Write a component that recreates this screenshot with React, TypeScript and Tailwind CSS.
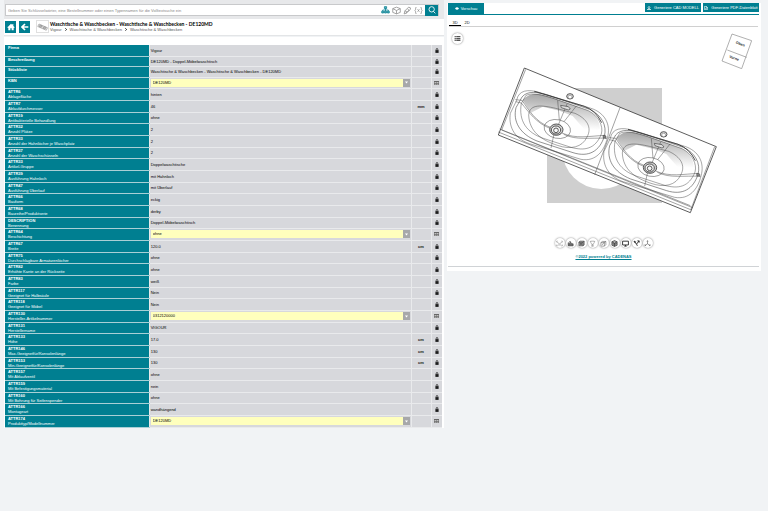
import type { ReactNode } from "react";

type Row = { code: string; name?: string; value: string; unit?: string; options?: boolean };

const headRows: Row[] = [
  { code: "Firma", value: "Vigour" },
  { code: "Beschreibung", value: "DE120MD - Doppel-Möbelwaschtisch" },
  { code: "Stückliste", value: "Waschtische & Waschbecken - Waschtische & Waschbecken - DE120MD" },
  { code: "KBN", value: "DE120MD", options: true },
];

const attrRows: Row[] = [
  { code: "ATTR6", name: "Ablagefläche", value: "hinten" },
  { code: "ATTR7", name: "Ablaufdurchmesser", value: "46", unit: "mm" },
  { code: "ATTR19", name: "Antibakterielle Behandlung", value: "ohne" },
  { code: "ATTR32", name: "Anzahl Plätze", value: "2" },
  { code: "ATTR33", name: "Anzahl der Hahnlöcher je Waschplatz", value: "2" },
  { code: "ATTR37", name: "Anzahl der Waschschüsseln", value: "2" },
  { code: "ATTR33", name: "Artikel-Gruppe", value: "Doppelwaschtische" },
  { code: "ATTR39", name: "Ausführung Hahnloch", value: "mit Hahnloch" },
  { code: "ATTR47", name: "Ausführung Überlauf", value: "mit Überlauf" },
  { code: "ATTR66", name: "Bauform", value: "eckig" },
  { code: "ATTR68", name: "Baureihe/Produktserie", value: "derby" },
  { code: "DESCRIPTION", name: "Benennung", value: "Doppel-Möbelwaschtisch" },
  { code: "ATTR64", name: "Beschichtung", value: "ohne", options: true },
  { code: "ATTR67", name: "Breite", value: "120.0", unit: "cm" },
  { code: "ATTR75", name: "Durchschlagbare Armaturenlöcher", value: "ohne" },
  { code: "ATTR82", name: "Erhöhte Kante an der Rückseite", value: "ohne" },
  { code: "ATTR83", name: "Farbe", value: "weiß" },
  { code: "ATTR117", name: "Geeignet für Halbsäule", value: "Nein" },
  { code: "ATTR118", name: "Geeignet für Möbel", value: "Nein" },
  { code: "ATTR130", name: "Hersteller-Artikelnummer", value: "0312120000", options: true },
  { code: "ATTR131", name: "Herstellername", value: "VIGOUR" },
  { code: "ATTR133", name: "Höhe", value: "17.0", unit: "cm" },
  { code: "ATTR146", name: "Max-Geeignetfür/Konsolenlänge", value: "130", unit: "cm" },
  { code: "ATTR153", name: "Min-Geeignetfür/Konsolenlänge", value: "130", unit: "cm" },
  { code: "ATTR157", name: "Mit Ablaufventil", value: "ohne" },
  { code: "ATTR159", name: "Mit Befestigungsmaterial", value: "nein" },
  { code: "ATTR160", name: "Mit Bohrung für Seifenspender", value: "ohne" },
  { code: "ATTR166", name: "Montageart", value: "wandhängend" },
  { code: "ATTR174", name: "Produkttyp/Modellnummer", value: "DE120MD", options: true },
];

function AttributeRow({ row, height, id }: { row: Row; height: string; id: string }) {
  const cell = "border-b border-l border-[#e9eaec] bg-[#d7d8dc] p-0 align-middle";
  return (
    <tr className={height}>
      <th scope="row" className="border-b border-[#a9d0d6] bg-[#007f91] p-0 pl-[3px] text-left align-top text-white">
        <label htmlFor={row.options ? id : undefined} className="block pt-px">
          <span className="block text-[4px] leading-[4px] font-bold">{row.code}</span>
          {row.name && <span className="block text-[4px] leading-[5px] font-normal">{row.name}</span>}
        </label>
      </th>
      <td className={cell}>
        {row.options ? (
          <span className="relative mr-px ml-px block h-2">
            <select id={id} className="block h-2 w-full appearance-none rounded-none bg-[#ffffbd] pl-[2px] text-[4px] leading-[8px] font-medium text-black">
              <option>{row.value}</option>
            </select>
            <span className="pointer-events-none absolute top-0 right-0 flex h-2 w-[7px] items-center justify-center bg-[#a7a8aa]">
              <svg viewBox="0 0 6 6" className="size-[3px] fill-white"><path d="M0 1h6L3 5z" /></svg>
            </span>
          </span>
        ) : (
          <span className="block pl-px text-[4px] leading-[5px] font-medium text-black">{row.value}</span>
        )}
      </td>
      <td className={cell}>
        <span className="block text-center text-[4px] leading-[5px] font-bold">{row.unit}</span>
      </td>
      <td className={cell}>
        {row.options ? (
          <svg viewBox="0 0 10 8" className="mx-auto block h-1 w-[5px]"><path d="M0 0h10v8H0z" fill="#666" /><path d="M1 2.500h3v1.500H1zM5 2.500h4v1.500H5zM1 5.500h3V7H1zM5 5.500h4V7H5z" fill="#ddd" /></svg>
        ) : (
          <svg viewBox="0 0 10 12" className="mx-auto block h-[5px] w-1"><path d="M1 5h8v7H1z" fill="#1c1c1c" /><path d="M3 5V3a2 2 0 0 1 4 0v2" fill="none" stroke="#1c1c1c" strokeWidth="1.8" /></svg>
        )}
      </td>
    </tr>
  );
}

function Basin() {
  return (
    <g fill="none" stroke="#333" strokeWidth="1.3">
      <path d="M107 121C112 90 142 87 174 97L330 145C371 158 391 193 379 234C370 272 345 306 300 298L145 251C94 233 83 193 88 160Z" />
      <path d="M123 111C139 91 170 96 203 106L326 148C361 164 379 196 370 229C356 273 324 293 276 278L168 243C116 222 95 184 105 143Z" strokeWidth="1.6" />
      <path d="M135 106C155 97 184 105 219 116L322 152C352 167 368 198 361 222C343 268 310 273 270 262L187 235C137 218 112 183 121 130Z" />
      <path d="M143 165C146 130 184 136 224 145L282 160C318 176 334 203 318 231C304 262 269 270 229 256C181 240 145 215 143 165Z" />
      <path d="M103 119L123 121C144 151 165 187 208 202M243 219C285 238 325 228 374 226M104 125L121 129C142 155 168 191 207 205M248 223C287 242 327 232 378 235" />
      <path d="M366 226l9 2v7l-9-2z" fill="#888" />
      <path d="M230 121L235 181M286 138L249 185M258 132L231 197M219 222L210 264" />
      <path d="M160 94L310 139Q344 151 362 188" strokeWidth="2.6" />
      <ellipse cx="229" cy="207" rx="40" ry="28" transform="rotate(12 229 207)" />
      <ellipse cx="226" cy="209" rx="20" ry="17" fill="#ccc" strokeWidth="2.4" />
      <ellipse cx="225" cy="210" rx="14" ry="12" fill="#f6f6f6" strokeWidth="2.4" />
      <circle cx="225" cy="211" r="7" strokeWidth="2.4" />
      <ellipse cx="267" cy="109" rx="10" ry="8" fill="#ddd" strokeWidth="2.4" />
      <ellipse cx="267" cy="111" rx="6" ry="5" fill="#fff" strokeWidth="1" />
      <path d="M239 136l23 4 6 7-6 3-21-7z" fill="#ddd" strokeWidth="1.8" />
    </g>
  );
}

function Washbasin() {
  return (
    <svg viewBox="45 15 669 450" className="mt-[33px] ml-auto h-[150px] w-[223px]" role="img" aria-label="DE120MD">
      <defs>
        <linearGradient id="shade" x1="0.3" y1="0" x2="0.15" y2="1"><stop offset="0" stopColor="#a4a4a4" /><stop offset=".8" stopColor="#fff" /></linearGradient>
      </defs>
      <path d="M198 84H543V429H198z" fill="#cfcfcf" />
      <circle cx="361" cy="270" r="117" fill="#fff" />
      <path d="M130 24L706 260L628 458L52 225z" fill="#fff" stroke="#333" strokeWidth="2.4" />
      <path d="M134 28L62 210L635 443M52 216L629 449M56 207L628 437M701 260L629 450M417 143L341 344" fill="none" stroke="#444" strokeWidth="1.5" />
      <path d="M125 120C150 93 180 101 218 114L320 151Q354 166 357 207L320 220L275 168L235 152L185 140L150 158z" fill="url(#shade)" />
      <path d="M406 234C431 207 461 215 499 228L601 265Q635 280 638 321L601 334L556 282L516 266L466 254L431 272z" fill="url(#shade)" />
      <Basin />
      <g transform="translate(281 114)"><Basin /></g>
    </svg>
  );
}

const toolIcons: { label: string; color: string; art: ReactNode }[] = [
  { label: "Zoom", color: "text-[#888]", art: <path d="M2 8V4h4M18 4h4v4M22 16v4h-4M6 20H2v-4M4 8l8 5 8-5M6 17h12" /> },
  { label: "Messen", color: "text-[#333]", art: <path d="M4 20V9l6 5V4l6 9h5v7zM4 17h16" fill="#888" /> },
  { label: "Schnitt", color: "text-[#333]", art: <path d="M3 7l4-3h14v13l-4 3H3zM3 8h14v12M17 8l4-4M6 12h8M6 16h8" fill="#aaa" /> },
  { label: "Beleuchtung", color: "text-[#888]", art: <path d="M6 4h12v5l-4 6h-4L6 9zM10 15v5h4v-5M3 5h3M18 5h3M8 21h8" /> },
  { label: "Ansicht", color: "text-[#666]", art: <path d="M3 9l5-4h12v11l-5 5H3zM3 9h12v12M15 9l5-4M7 17l9-11" /> },
  { label: "Darstellung", color: "text-[#222]", art: <path d="M12 2l9 4v12l-9 4-9-4V6zM3 6l9 4 9-4M12 10v12M6 12l4 2M14 14l5-2" fill="#999" /> },
  { label: "Vollbild", color: "text-[#222]", art: <path d="M2 4h20v13H2zM12 17v4M8 21h8" strokeWidth="3" /> },
  { label: "Explosion", color: "text-[#222]", art: <path d="M4 5l8 9 9-11M15 3h6v6M12 14l3 6M4 4l3 5 2-3z" strokeWidth="3" /> },
  { label: "Achsen", color: "text-[#555]", art: <path d="M12 13V3M12 13l-9 6M12 13l9 6M10 5l2-3 2 3M3 15v4h4M21 15v4h-4" /> },
];

function HierarchyIcon() {
  return (
    <svg viewBox="0 0 24 20" className="h-2 w-[9px] fill-[#5fb0bb] stroke-[#007f91]" strokeWidth="2">
      <path d="M9 1h6v5H9zM2 13h5v5H2zM9.500 13h5v5h-5zM17 13h5v5h-5z" /><path d="M12 6v7M4.500 13V10h15v3" fill="none" />
    </svg>
  );
}

const navButton = "flex h-3 w-[11px] items-center justify-center bg-[#007f91] text-white";
const actionButton = "flex h-[9px] w-14 items-center justify-center gap-[3px] bg-[#007f91] text-[4px] leading-[5px] font-medium whitespace-nowrap text-white";

export default function App() {
  return (
    <div className="min-h-screen bg-[#f1f3f5] pr-[7px] font-['Liberation_Sans',Arial,sans-serif] text-[#111]">
      <div className="grid grid-cols-[444fr_314fr] items-start gap-[3px]">
        <main className="pl-1">
          <div className="bg-[#e7e8ea] pt-1 pr-[5px] pb-[3px] pl-px">
            <form className="flex h-3 items-center border border-[#c8c9cb] bg-white">
              <input aria-label="Suche" placeholder="Geben Sie Schlüsselwörter, eine Bestellnummer oder einen Typennamen für die Volltextsuche ein" className="h-full min-w-0 flex-1 px-[2px] text-[4px] outline-none placeholder:text-[#888]" />
              <div className="flex items-center gap-[2px] text-[#888]">
                <HierarchyIcon />
                <svg viewBox="0 0 24 24" className="size-[9px] fill-none stroke-current" strokeWidth="2"><path d="M2 7l10-4 10 4v10l-10 4-10-4zM2 7l10 5 10-5M12 12v9" /></svg>
                <svg viewBox="0 0 24 24" className="size-[9px] fill-none stroke-current" strokeWidth="2"><path d="M3 21l2-8L15 3l5 2-1 5L9 19zM5 13l4 1v5M12 8l4 3-6 6" /></svg>
                <svg viewBox="0 0 28 24" className="size-[9px] fill-none stroke-current" strokeWidth="2"><path d="M8 3H5v7l-3 2 3 2v7h3M20 3h3v7l3 2-3 2v7h-3M11 8l6 8M17 8l-6 8" /></svg>
                <button type="button" aria-label="Suchen" className="flex h-[11px] w-[13px] items-center justify-center bg-[#007f91] text-white">
                  <svg viewBox="0 0 24 24" className="size-2 fill-none stroke-current" strokeWidth="2.6"><circle cx="11" cy="10" r="8" /><path d="M16 16l6 6" /></svg>
                </button>
              </div>
            </form>
          </div>

          <header className="flex h-[17px] items-center border-b border-[#e3e5e7] bg-white pb-px pl-px">
            <button type="button" aria-label="Startseite" className={navButton}>
              <svg viewBox="0 0 24 22" className="size-2 fill-current"><path d="M12 1l4 4V2h3v6l4 4-2 2-1-1v8h-6v-6h-4v6H4v-8l-1 1-2-2z" /></svg>
            </button>
            <button type="button" aria-label="Zurück" className={navButton + " ml-[3px]"}>
              <svg viewBox="0 0 24 24" className="size-2 fill-none stroke-current" strokeWidth="5"><path d="M22 12H4M12 3l-9 9 9 9" /></svg>
            </button>
            <span className="ml-[6px] flex size-[13px] items-center justify-center border border-[#e0e0e0]">
              <svg viewBox="0 0 44 30" className="h-2 w-[11px] fill-[#eee] stroke-[#777]" strokeWidth="2"><path d="M8 3L42 18l-5 10L3 13z" /><ellipse cx="15" cy="12" rx="6" ry="4" fill="#bbb" /><ellipse cx="30" cy="18" rx="6" ry="4" fill="#bbb" /></svg>
            </span>
            <div className="pl-px">
              <h1 className="font-[Lato,sans-serif] text-[5px] leading-[5px] font-bold whitespace-nowrap text-black">Waschtische &amp; Waschbecken - Waschtische &amp; Waschbecken - DE120MD</h1>
              <nav className="flex items-center gap-[3px] text-[4px] leading-[5px] text-[#555]">
                <a href="#">Vigour</a>
                <svg viewBox="0 0 6 10" className="h-[3px] w-[2px] fill-none stroke-black" strokeWidth="3"><path d="M1 1l4 4-4 4" /></svg>
                <a href="#">Waschtische &amp; Waschbecken</a>
                <svg viewBox="0 0 6 10" className="h-[3px] w-[2px] fill-none stroke-black" strokeWidth="3"><path d="M1 1l4 4-4 4" /></svg>
                <a href="#">Waschtische &amp; Waschbecken</a>
              </nav>
            </div>
          </header>

          <div className="mt-px bg-white pt-2 pr-[2px] pl-px">
            <table className="w-full table-fixed">
              <colgroup><col className="w-[33%]" /><col /><col className="w-5" /><col className="w-[11px]" /></colgroup>
              <tbody>
                {headRows.map((row, i) => <AttributeRow key={row.code} row={row} id={`head-${i}`} height={i === 1 ? "h-[10px]" : "h-[11px]"} />)}
                {attrRows.map((row, i) => <AttributeRow key={i} row={row} id={`attr-${i}`} height={i % 3 === 2 ? "h-[11px]" : "h-3"} />)}
              </tbody>
            </table>
          </div>
        </main>

        <aside className="mt-[3px] bg-white pr-[2px] pb-1 pl-px">
          <div className="flex h-3 items-start border-b border-[#007f91]">
            <button type="button" className="flex h-[11px] w-9 items-center justify-center gap-[2px] bg-[#007f91] text-[4px] leading-[5px] font-medium text-white">
              <svg viewBox="0 0 12 8" className="h-[3px] w-1 fill-white"><path d="M0 4q6-8 12 0-6 8-12 0z" /></svg>
              Vorschau
            </button>
            <div className="ml-auto flex gap-[2px]">
              <button type="button" className={actionButton}>
                <svg viewBox="0 0 10 10" className="size-1 fill-none stroke-white" strokeWidth="2"><path d="M5 0v6M2 4l3 3 3-3M0 9h10" /></svg>
                Generiere CAD MODELL
              </button>
              <button type="button" className={actionButton}>
                <svg viewBox="0 0 10 10" className="size-1 fill-none stroke-white" strokeWidth="1.5"><path d="M1 1h5l3 3v5H1zM6 1v3h3M3 6h4" /></svg>
                Generiere PDF-Datenblatt
              </button>
            </div>
          </div>

          <div className="mx-px flex h-3 items-end border-b border-[#d0d0d0] text-[4px] leading-[5px]">
            <button type="button" className="h-[7px] w-3 border-b border-black font-medium">3D</button>
            <button type="button" className="h-[7px] w-3">2D</button>
          </div>

          <div className="flex items-start pt-[5px] pr-[7px] pl-1">
            <button type="button" aria-label="Struktur" className="mt-px flex size-[11px] items-center justify-center rounded-full bg-white shadow-[0_0_2px_#777]">
              <svg viewBox="0 0 14 12" className="h-[5px] w-[7px] fill-[#555]"><path d="M0 0h3v3H0zM4 0h10v3H4zM0 4.500h3v3H0zM4 4.500h10v3H4zM0 9h3v3H0zM4 9h10v3H4z" /></svg>
            </button>
            <Washbasin />
            <svg viewBox="0 0 93 108" className="mt-px ml-[2px] h-9 w-[31px]">
              <path d="M33 3L92 23 62 107 3 84zM19 51l58 22" fill="none" stroke="#888" strokeWidth="2" />
              <g transform="rotate(20 46 54)" fontSize="11" fontWeight="700" fill="#333" textAnchor="middle"><text x="50" y="34">Oben</text><text x="47" y="80">Vorne</text></g>
            </svg>
          </div>

          <div className="mt-[23px] flex items-center justify-center gap-px">
            {toolIcons.map((tool) => (
              <button key={tool.label} type="button" aria-label={tool.label} className={"flex size-[10px] items-center justify-center rounded-full bg-white shadow-[0_0_2px_#777] " + tool.color}>
                <svg viewBox="0 0 24 24" className="size-[7px] fill-none stroke-current" strokeWidth="2">{tool.art}</svg>
              </button>
            ))}
          </div>
          <p className="mt-[6px] mb-[6px] text-center text-[4px] leading-[6px] font-bold"><a href="#" className="text-[#007f91] underline">©2022 powered by CADENAS</a></p>
          <hr className="border-[#d0d3d6]" />
        </aside>
      </div>
    </div>
  );
}
